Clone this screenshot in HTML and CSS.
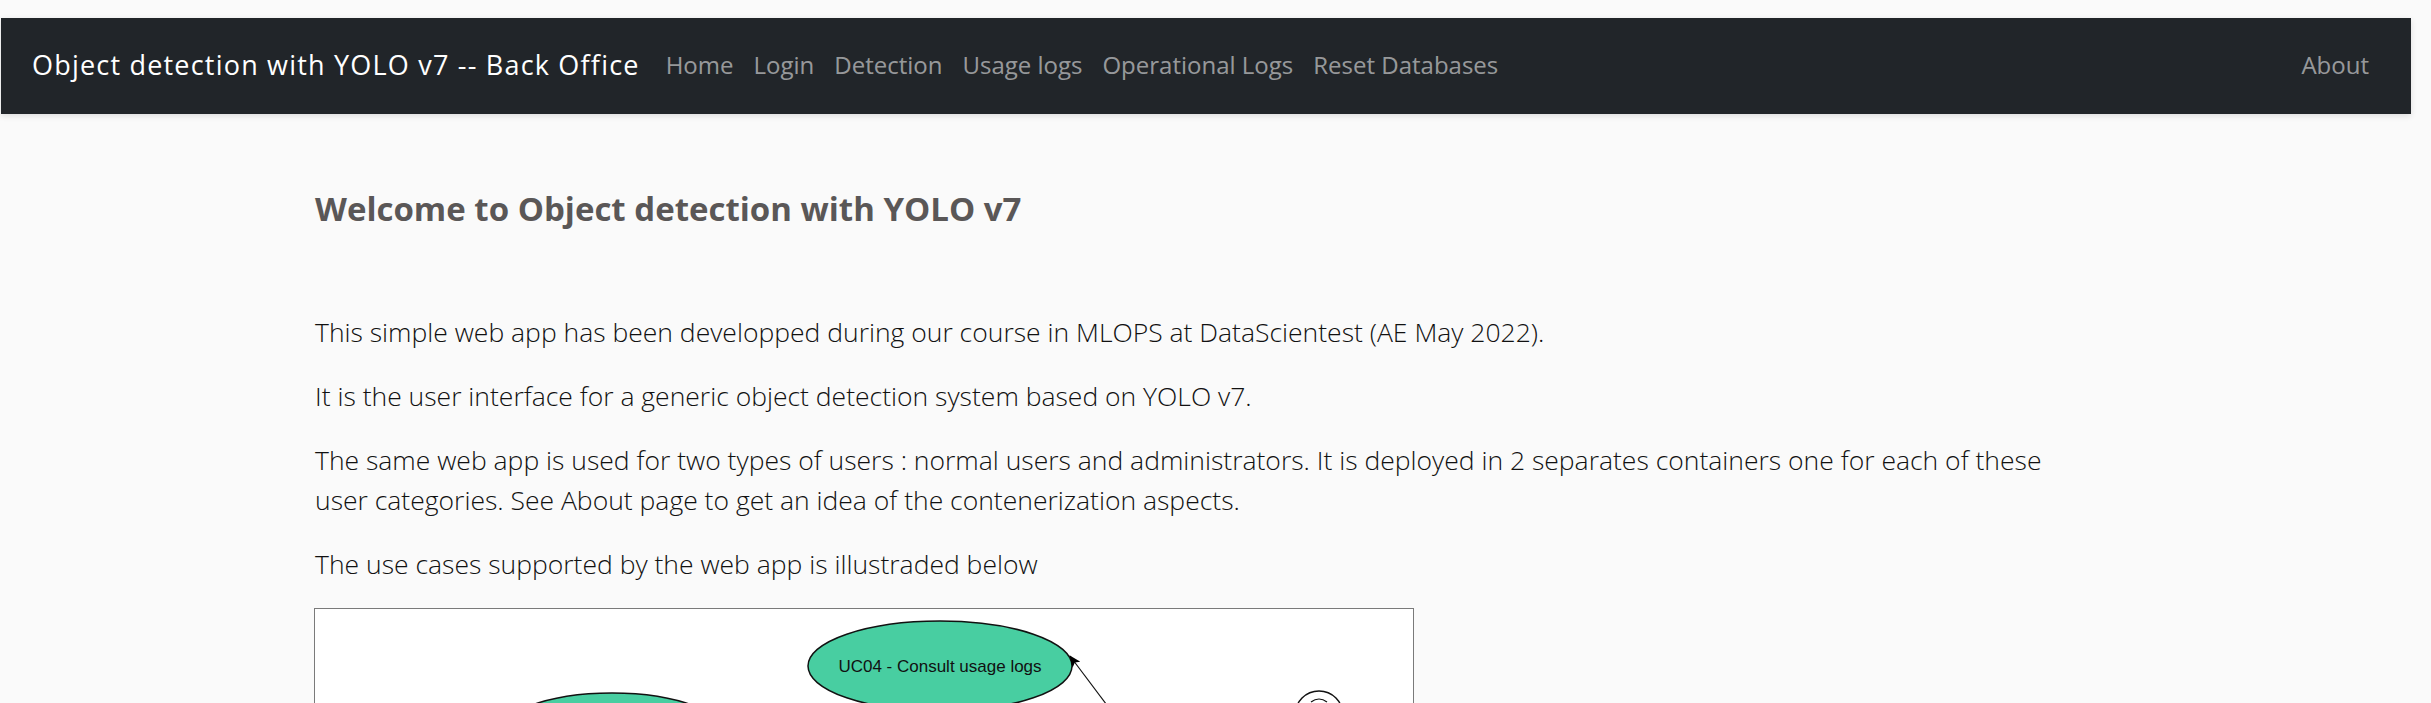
FILE: index.html
```html
<!DOCTYPE html>
<html lang="en">
<head>
<meta charset="utf-8">
<title>Object detection with YOLO v7 -- Back Office</title>
<link rel="stylesheet" href="styles.css">
</head>
<body>
<nav class="navbar">
  <a class="brand" href="#">Object detection with YOLO v7 -- Back Office</a>
  <ul class="nav-links">
    <li><a href="#">Home</a></li>
    <li><a href="#">Login</a></li>
    <li><a href="#">Detection</a></li>
    <li><a href="#">Usage logs</a></li>
    <li><a href="#">Operational Logs</a></li>
    <li><a href="#">Reset Databases</a></li>
  </ul>
  <ul class="nav-links nav-right">
    <li><a href="#">About</a></li>
  </ul>
</nav>
<main class="content">
  <h1 class="title">Welcome to Object detection with YOLO v7</h1>
  <p>This simple web app has been developped during our course in MLOPS at DataScientest (AE May 2022).</p>
  <p>It is the user interface for a generic object detection system based on YOLO v7.</p>
  <p>The same web app is used for two types of users : normal users and administrators. It is deployed in 2 separates containers one for each of these user categories. See About page to get an idea of the contenerization aspects.</p>
  <p>The use cases supported by the web app is illustraded below</p>
  <figure class="diagram">
    <svg width="1098" height="620" viewBox="0 0 1098 620" xmlns="http://www.w3.org/2000/svg">
      <defs>
        <marker id="arr" markerWidth="12" markerHeight="10" refX="11" refY="5" orient="auto" markerUnits="userSpaceOnUse">
          <path d="M0,0 L12,5 L0,10 L3,5 Z" fill="#000"/>
        </marker>
      </defs>
      <ellipse cx="625" cy="57" rx="132" ry="45" fill="#48cea1" stroke="#111" stroke-width="1.5"/>
      <text x="625" y="63" text-anchor="middle" class="uc-label">UC04 - Consult usage logs</text>
      <ellipse cx="297" cy="129" rx="118" ry="45" fill="#48cea1" stroke="#111" stroke-width="1.5"/>
      <line x1="840" y1="160" x2="755" y2="47" stroke="#111" stroke-width="1.2" marker-end="url(#arr)"/>
      <circle cx="1004" cy="106" r="24" fill="#fff" stroke="#111" stroke-width="1.5"/>
      <path d="M996,93 q8,-6 16,0" fill="none" stroke="#111" stroke-width="1.2"/>
      <line x1="1004" y1="130" x2="1004" y2="200" stroke="#111" stroke-width="1.5"/>
      <line x1="974" y1="155" x2="1034" y2="155" stroke="#111" stroke-width="1.5"/>
      <line x1="1004" y1="200" x2="980" y2="240" stroke="#111" stroke-width="1.5"/>
      <line x1="1004" y1="200" x2="1028" y2="240" stroke="#111" stroke-width="1.5"/>
    </svg>
  </figure>
</main>
</body>
</html>
```
FILE: styles.css
```css
* { box-sizing: border-box; }
html, body { margin: 0; padding: 0; }
body {
  background: #fafafa;
  color: #111;
  font-family: "Open Sans", "Noto Sans", sans-serif;
}
a { text-decoration: none; }

.navbar {
  display: flex;
  align-items: center;
  height: 96px;
  width: 2410px;
  margin: 18px 0 0 1px;
  padding: 0 32px 3px 31px;
  background: #212529;
  box-shadow: 0 2px 6px rgba(0, 0, 0, 0.12);
}
.brand {
  color: #fff;
  font-size: 27px;
  letter-spacing: 1.2px;
  font-weight: 400;
  margin-right: 16px;
  white-space: nowrap;
}
.nav-links {
  display: flex;
  list-style: none;
  margin: 0;
  padding: 0;
}
.nav-links a {
  display: block;
  padding: 0 10px;
  font-size: 24px;
  color: rgba(255, 255, 255, 0.55);
  white-space: nowrap;
}
.nav-right { margin-left: auto; }

.content {
  width: 1770px;
  margin-left: 315px;
  padding-top: 75px;
}
.title {
  margin: 0 0 83px;
  font-size: 33px;
  line-height: 40px;
  font-weight: 700;
  color: #5a5757;
}
.content p {
  margin: 0 0 24px;
  font-size: 26.5px;
  line-height: 40px;
  font-weight: 300;
}
.diagram {
  margin: 2px 0 0 -1px;
  width: 1100px;
  border: 1px solid #7a7a7a;
  background: #fff;
  line-height: 0;
}
.diagram svg { display: block; }
.uc-label {
  font-family: "Liberation Sans", Arial, sans-serif;
  font-size: 17px;
  fill: #111;
}
```
